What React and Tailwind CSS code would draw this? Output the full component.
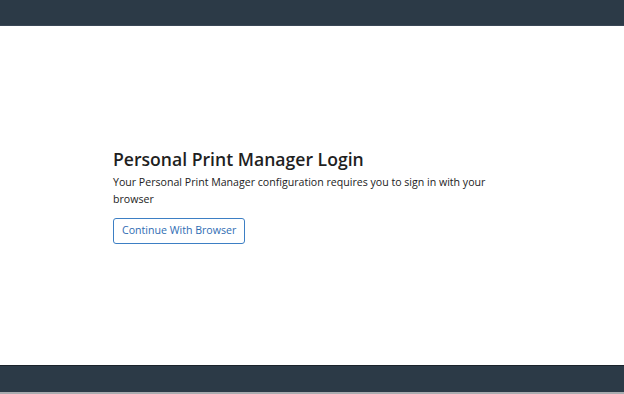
export default function App() {
  return (
    <div className="flex h-[394px] w-[624px] flex-col bg-white" style={{ fontFamily: '"Open Sans", "Noto Sans", sans-serif' }}>
      <div className="h-[26px] shrink-0 border-b border-[#3a4756] bg-[#2c3a47]" />
      <div className="flex flex-1 items-center pl-[113px]">
        <div className="w-[385px]">
          <h1 className="text-[17.6px] font-semibold leading-[22px] text-[#1f1f1f]">Personal Print Manager Login</h1>
          <p className="mt-[4px] text-[10.6px] leading-[17px] text-[#222]">
            Your Personal Print Manager configuration requires you to sign in with your browser
          </p>
          <button className="mt-[10px] h-[26px] rounded-[3px] border border-[#3d7fc4] px-[8px] text-[10.6px] text-[#2f6db3]">
            Continue With Browser
          </button>
        </div>
      </div>
      <div className="h-[29px] shrink-0 border-t border-[#1b232b] border-b-2 border-b-[#a9acb0] bg-[#2c3a47]" />
    </div>
  );
}
